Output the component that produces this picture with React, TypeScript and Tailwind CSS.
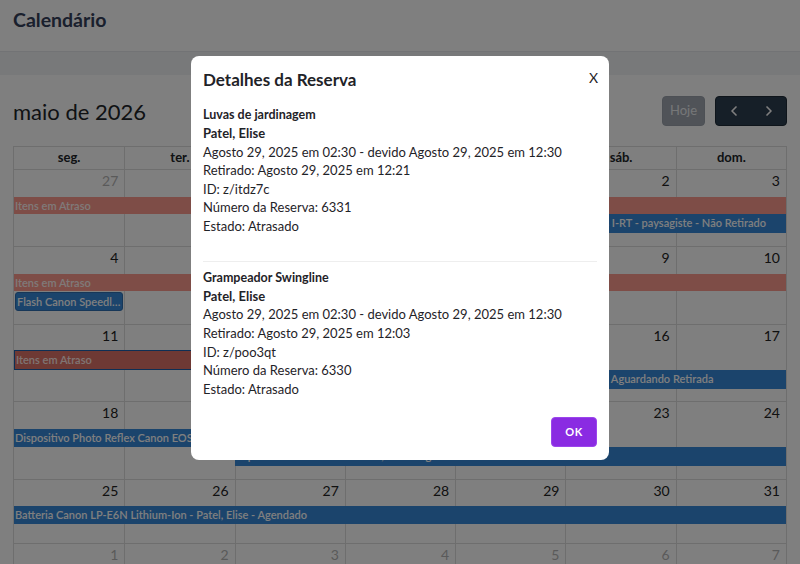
import React from 'react';
import { ChevronLeft, ChevronRight } from 'lucide-react';

type CalEvent = {
  title: string;
  start: number; // 1-based column
  span: number;
  row: number; // grid row inside the week
  kind: 'late' | 'lateActive' | 'booking' | 'bookingRounded';
};

type Week = {
  days: { n: number; other?: boolean }[];
  rows: string;
  events: CalEvent[];
};

const COL_START = ['', 'col-start-1', 'col-start-2', 'col-start-3', 'col-start-4', 'col-start-5', 'col-start-6', 'col-start-7'];
const COL_SPAN = ['', 'col-span-1', 'col-span-2', 'col-span-3', 'col-span-4', 'col-span-5', 'col-span-6', 'col-span-7'];
const ROW_START = ['', 'row-start-1', 'row-start-2', 'row-start-3', 'row-start-4'];

const EVENT_STYLE = {
  late: 'bg-[#fc9a8e] text-[#fff4f2]',
  lateActive: 'bg-[#dc7268] text-[#ffe9e6] border border-[#1d5fa8]',
  booking: 'bg-[#3788d8] text-white',
  bookingRounded: 'bg-[#3788d8] text-white rounded-[3px] mx-[1px] my-[1px] border border-[#2f6fb0]',
};

const WEEKDAYS = ['seg.', 'ter.', 'qua.', 'qui.', 'sex.', 'sáb.', 'dom.'];

const WEEKS: Week[] = [
  {
    days: [{ n: 27, other: true }, { n: 28, other: true }, { n: 29, other: true }, { n: 30, other: true }, { n: 1 }, { n: 2 }, { n: 3 }],
    rows: 'grid-rows-[27px_17px_19px_13px]',
    events: [
      { title: 'Itens em Atraso', start: 1, span: 7, row: 2, kind: 'late' },
      { title: 'Tesouras I-RT - paysagiste - Não Retirado', start: 6, span: 2, row: 3, kind: 'booking' },
    ],
  },
  {
    days: [{ n: 4 }, { n: 5 }, { n: 6 }, { n: 7 }, { n: 8 }, { n: 9 }, { n: 10 }],
    rows: 'grid-rows-[27px_17px_21px_12px]',
    events: [
      { title: 'Itens em Atraso', start: 1, span: 7, row: 2, kind: 'late' },
      { title: 'Flash Canon Speedlite 430EX III-RT', start: 1, span: 1, row: 3, kind: 'bookingRounded' },
    ],
  },
  {
    days: [{ n: 11 }, { n: 12 }, { n: 13 }, { n: 14 }, { n: 15 }, { n: 16 }, { n: 17 }],
    rows: 'grid-rows-[25px_20px_19px_12px]',
    events: [
      { title: 'Itens em Atraso', start: 1, span: 3, row: 2, kind: 'lateActive' },
      { title: 'Drones - Aguardando Retirada', start: 6, span: 2, row: 3, kind: 'booking' },
    ],
  },
  {
    days: [{ n: 18 }, { n: 19 }, { n: 20 }, { n: 21 }, { n: 22 }, { n: 23 }, { n: 24 }],
    rows: 'grid-rows-[27px_18px_19px_13px]',
    events: [
      { title: 'Dispositivo Photo Reflex Canon EOS 80D - Patel, Elise - Atrasado', start: 1, span: 4, row: 2, kind: 'booking' },
      { title: 'Tripé Manfrotto Befree - Patel, Elise - Aguardando Retirada', start: 3, span: 5, row: 3, kind: 'booking' },
    ],
  },
  {
    days: [{ n: 25 }, { n: 26 }, { n: 27 }, { n: 28 }, { n: 29 }, { n: 30 }, { n: 31 }],
    rows: 'grid-rows-[26px_18px_19px]',
    events: [
      { title: 'Batteria Canon LP-E6N Lithium-Ion - Patel, Elise - Agendado', start: 1, span: 7, row: 2, kind: 'booking' },
    ],
  },
  {
    days: [{ n: 1, other: true }, { n: 2, other: true }, { n: 3, other: true }, { n: 4, other: true }, { n: 5, other: true }, { n: 6, other: true }, { n: 7, other: true }],
    rows: 'grid-rows-[26px_17px_19px_13px]',
    events: [],
  },
];

const RESERVATIONS = [
  {
    item: 'Luvas de jardinagem',
    patron: 'Patel, Elise',
    period: 'Agosto 29, 2025 em 02:30 - devido Agosto 29, 2025 em 12:30',
    pickedUp: 'Retirado: Agosto 29, 2025 em 12:21',
    id: 'ID: z/itdz7c',
    number: 'Número da Reserva: 6331',
    state: 'Estado: Atrasado',
  },
  {
    item: 'Grampeador Swingline',
    patron: 'Patel, Elise',
    period: 'Agosto 29, 2025 em 02:30 - devido Agosto 29, 2025 em 12:30',
    pickedUp: 'Retirado: Agosto 29, 2025 em 12:03',
    id: 'ID: z/poo3qt',
    number: 'Número da Reserva: 6330',
    state: 'Estado: Atrasado',
  },
];

const WeekRow: React.FC<{ week: Week }> = ({ week }) => (
  <div className={`grid grid-cols-7 border-t border-[#dddddd] ${week.rows}`}>
    {week.days.map((d, i) => (
      <div
        key={`c${i}`}
        className={`${COL_START[i + 1]} row-start-1 row-span-4 ${i > 0 ? 'border-l border-[#dddddd]' : ''}`}
      >
        <div className={`pr-[6px] pt-[1px] text-right text-[14px] leading-[20px] ${d.other ? 'text-[#b5b5b5]' : 'text-[#222222]'}`}>
          {d.n}
        </div>
      </div>
    ))}
    {week.events.map((e, i) => (
      <div
        key={`e${i}`}
        className={`${COL_START[e.start]} ${COL_SPAN[e.span]} ${ROW_START[e.row]} z-10 overflow-hidden whitespace-nowrap text-ellipsis px-[1px] text-[11px] font-semibold leading-[17px] ${EVENT_STYLE[e.kind]}`}
      >
        {e.title}
      </div>
    ))}
  </div>
);

export default function App() {
  return (
    <div className="relative h-[564px] w-[800px] overflow-hidden bg-white font-['Lato',sans-serif] text-[#212529]">
      <header className="h-[52px] border-b border-[#e5e7eb] px-[13px] pt-[7px]">
        <h1 className="text-[19.5px] font-bold leading-[26px] text-[#34405a]">Calendário</h1>
      </header>
      <div className="h-[23px] bg-[#f1f2f4]" />

      <main className="px-[13px]">
        <div className="mt-[21px] flex h-[30px] items-center justify-between">
          <h2 className="text-[22px] text-[#212529]">maio de 2026</h2>
          <div className="flex items-center gap-[10px]">
            <button className="h-[30px] w-[43px] rounded-[4px] border border-[#9aa1ab] bg-[#a0a7b1] text-[13px] text-[#eceef0]">
              Hoje
            </button>
            <div className="flex h-[30px] overflow-hidden rounded-[4px] border border-[#1e2b37] bg-[#2c3e50] text-white">
              <button className="flex w-[35px] items-center justify-center">
                <ChevronLeft size={16} strokeWidth={2.5} />
              </button>
              <button className="flex w-[35px] items-center justify-center">
                <ChevronRight size={16} strokeWidth={2.5} />
              </button>
            </div>
          </div>
        </div>

        <div className="mt-[20px] border-x border-t border-[#dddddd]">
          <div className="grid h-[22px] grid-cols-7">
            {WEEKDAYS.map((d, i) => (
              <div
                key={d}
                className={`flex items-center justify-center text-[13px] font-bold text-[#212529] ${i > 0 ? 'border-l border-[#dddddd]' : ''}`}
              >
                {d}
              </div>
            ))}
          </div>
          {WEEKS.map((w, i) => (
            <WeekRow key={i} week={w} />
          ))}
        </div>
      </main>

      <div className="absolute inset-0 z-20 flex justify-center bg-black/50 pt-[56px]">
        <div className="flex h-[404px] w-[418px] flex-col rounded-[8px] bg-white px-[12px] pt-[12px] pb-[13px] text-[#1f2328]">
          <div className="flex items-start justify-between">
            <h3 className="text-[17px] font-bold leading-[24px]">Detalhes da Reserva</h3>
            <button className="-mr-[1px] mt-[2px] text-[14px] leading-[16px]">X</button>
          </div>

          <div className="mt-[13px]">
            {RESERVATIONS.map((r, i) => (
              <div key={r.id} className={i > 0 ? 'mt-[25px] border-t border-[#eeeeee] pt-[6px]' : ''}>
                <div className="text-[12.5px] font-bold leading-[19px]">{r.item}</div>
                <div className="text-[13px] font-bold leading-[18.7px]">{r.patron}</div>
                <div className="text-[13px] leading-[18.6px]">{r.period}</div>
                <div className="text-[13px] leading-[18.6px]">{r.pickedUp}</div>
                <div className="text-[13px] leading-[18.6px]">{r.id}</div>
                <div className="text-[13px] leading-[18.6px]">{r.number}</div>
                <div className="text-[13px] leading-[18.6px]">{r.state}</div>
              </div>
            ))}
          </div>

          <div className="mt-auto flex justify-end">
            <button className="h-[30px] w-[46px] rounded-[4px] border border-[#9b45ec] bg-[#8a2be2] text-[11px] font-bold tracking-[0.5px] text-white">
              OK
            </button>
          </div>
        </div>
      </div>
    </div>
  );
}
